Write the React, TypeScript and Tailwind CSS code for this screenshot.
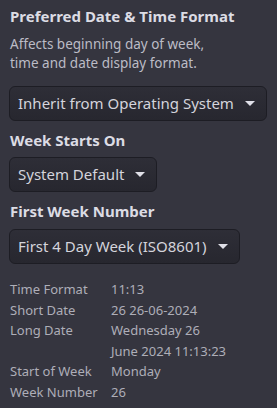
import React from 'react';

const Caret = () => (
  <svg width="10" height="5" viewBox="0 0 10 5" className="ml-[11px] shrink-0">
    <path d="M0 0h10L5 5z" fill="#e0e0e8" />
  </svg>
);

const Select = ({ label }: { label: string }) => (
  <div className="inline-flex items-center h-[35px] pl-[8px] pr-[11px] rounded-[6px] border border-[#1d1d24] bg-gradient-to-b from-[#2e2e37] to-[#27272f] text-[15px] text-[#d4d4dc]">
    {label}
    <Caret />
  </div>
);

const rows: [string, string][] = [
  ['Time Format', '11:13'],
  ['Short Date', '26 26-06-2024'],
  ['Long Date', 'Wednesday 26\nJune 2024 11:13:23'],
  ['Start of Week', 'Monday'],
  ['Week Number', '26'],
];

export default function App() {
  return (
    <div
      className="w-[277px] h-[408px] bg-[#35353f] px-[9px] pt-[5px] overflow-hidden"
      style={{ fontFamily: '"Noto Sans", "Open Sans", sans-serif' }}
    >
      <h2 className="text-[15px] font-bold text-[#dcdce4] leading-[22px] pl-[1px]">Preferred Date &amp; Time Format</h2>
      <p className="mt-[8px] text-[13.5px] leading-[19px] text-[#bcbcc6] pl-[1px]">
        Affects beginning day of week,
        <br />
        time and date display format.
      </p>
      <div className="mt-[13px] flex">
        <Select label="Inherit from Operating System" />
      </div>

      <h2 className="mt-[8px] text-[15px] font-bold text-[#dcdce4] leading-[22px] pl-[1px]">Week Starts On</h2>
      <div className="mt-[6px] flex">
        <Select label="System Default" />
      </div>

      <h2 className="mt-[8px] text-[15px] font-bold text-[#dcdce4] leading-[22px] pl-[1px]">First Week Number</h2>
      <div className="mt-[7px] flex">
        <Select label="First 4 Day Week (ISO8601)" />
      </div>

      <div className="mt-[15px] grid grid-cols-[101px_1fr] text-[13px] leading-[20.6px] text-[#aeaeb8] pl-[1px]">
        {rows.map(([k, v]) => (
          <React.Fragment key={k}>
            <div>{k}</div>
            <div className="whitespace-pre-line">{v}</div>
          </React.Fragment>
        ))}
      </div>
    </div>
  );
}
